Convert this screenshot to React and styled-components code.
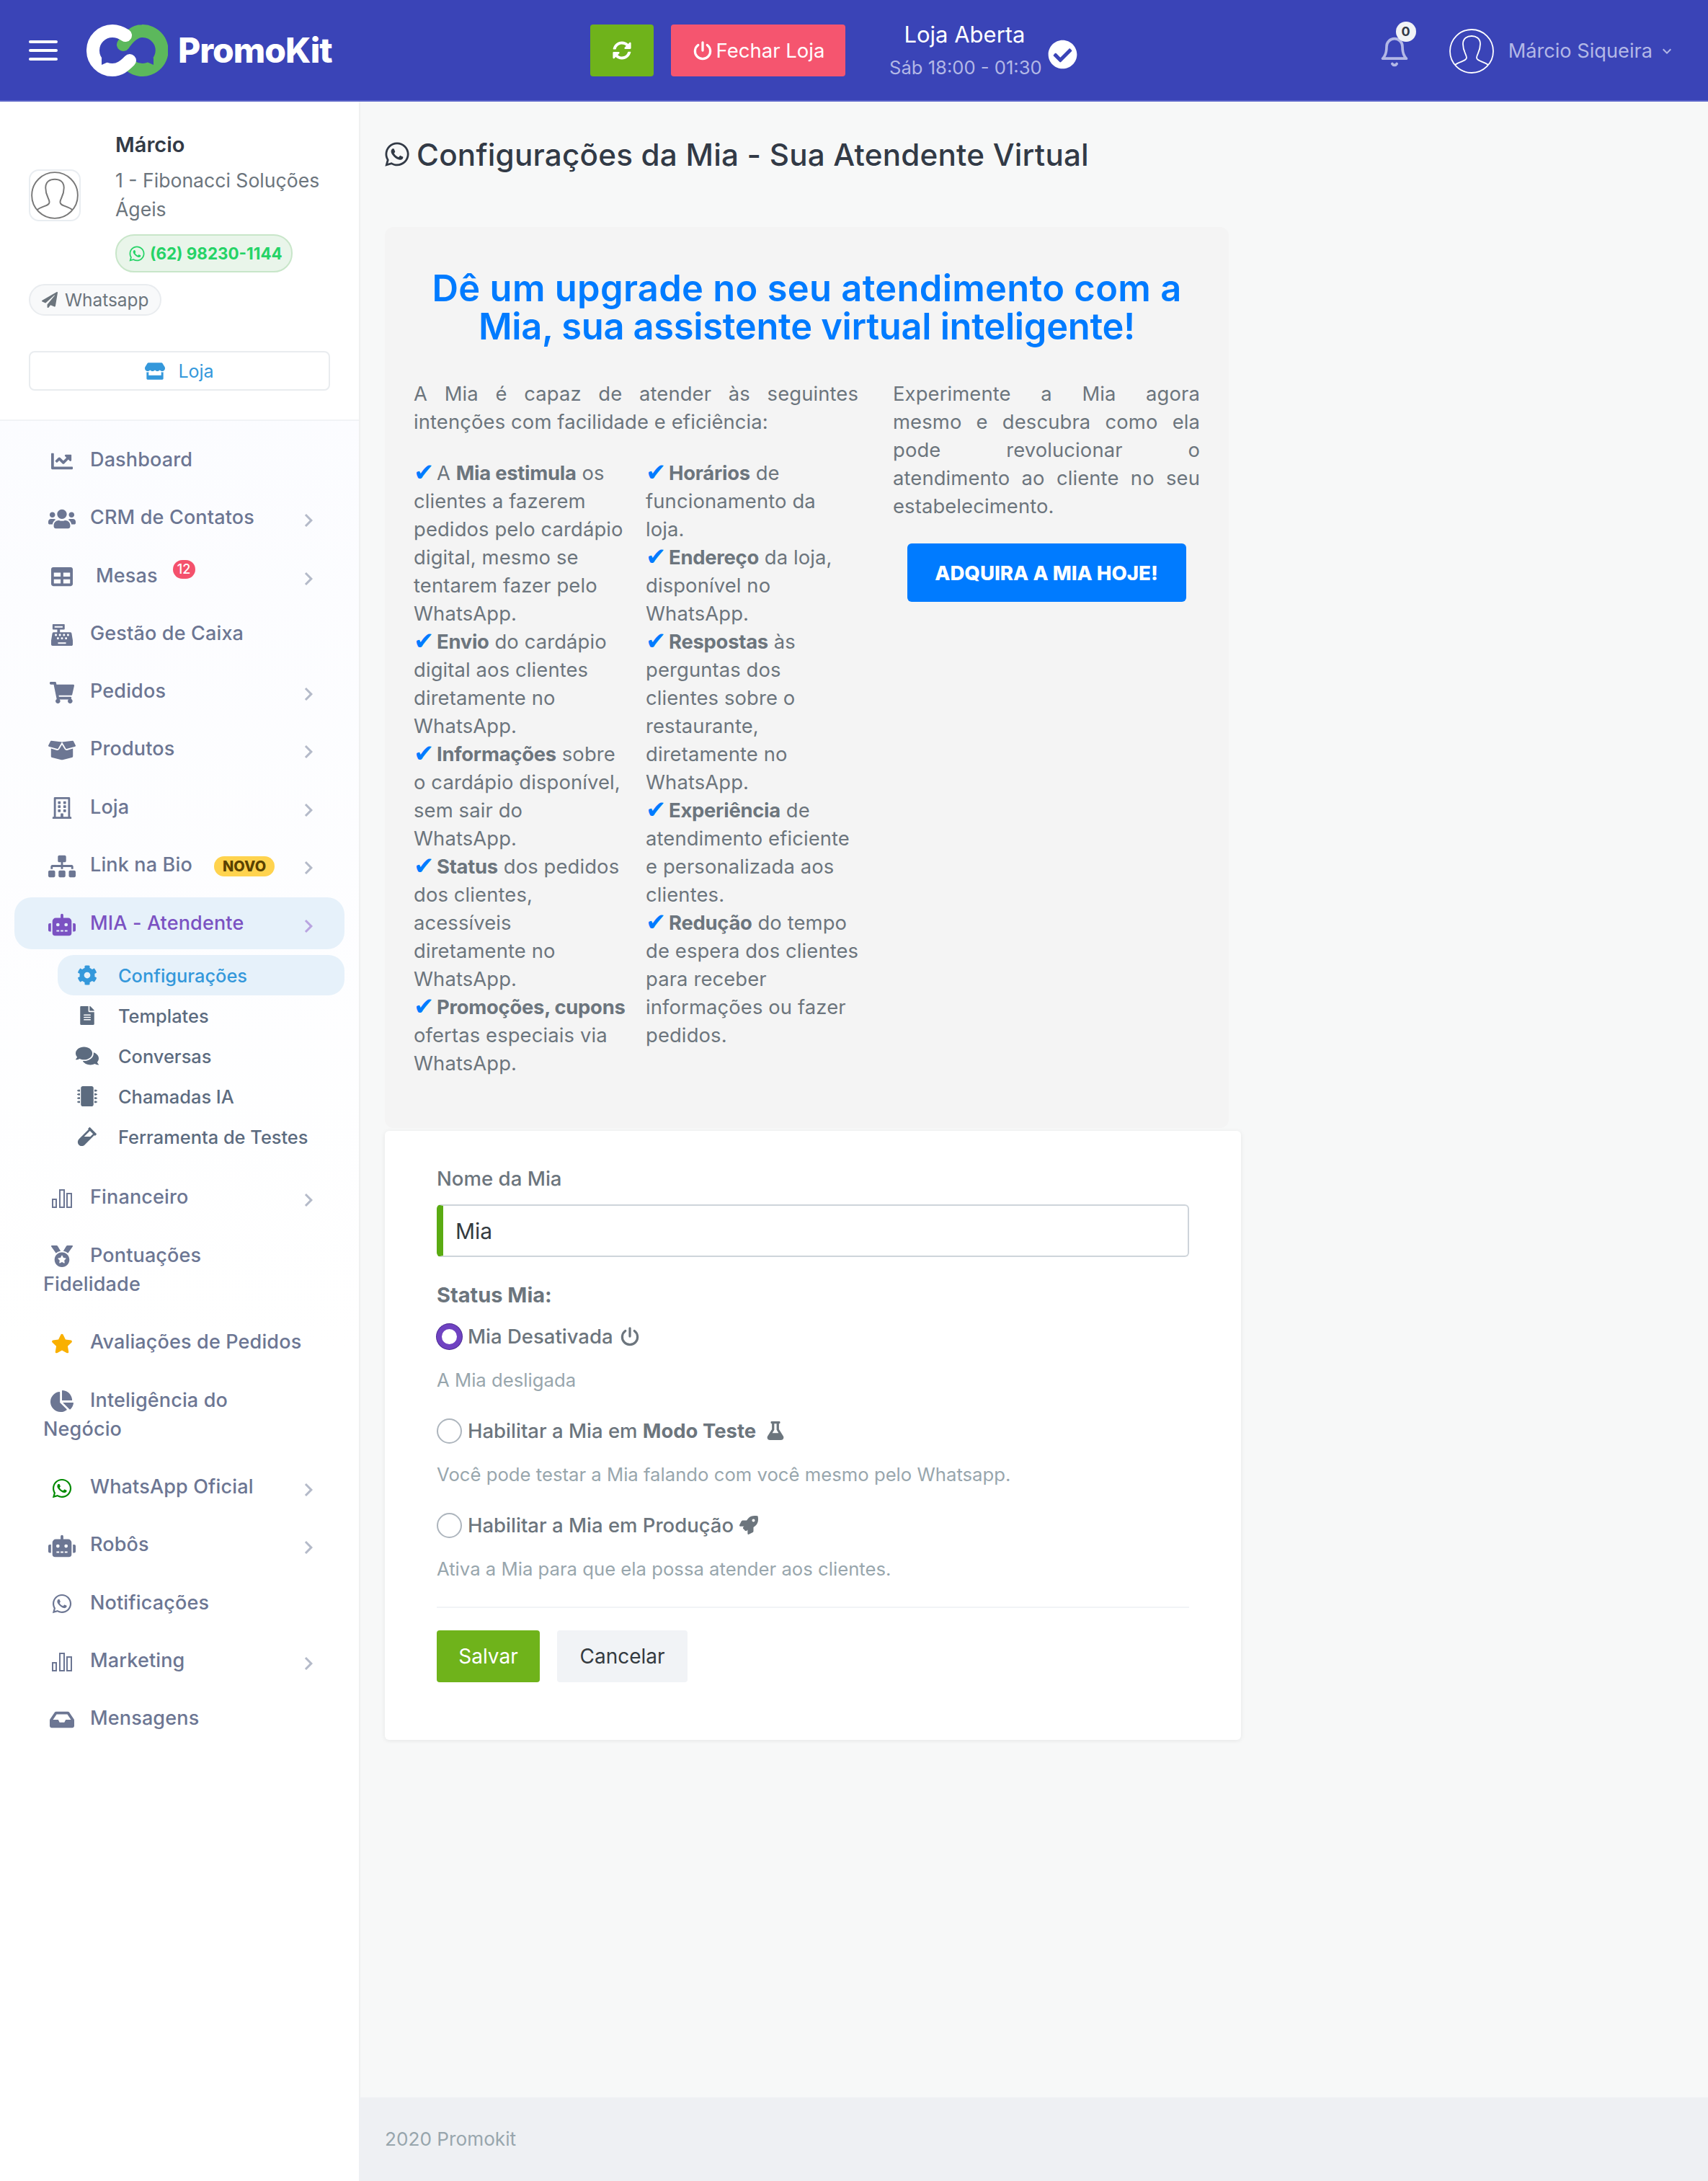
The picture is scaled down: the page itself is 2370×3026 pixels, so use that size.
import React from 'react';
import styled, { createGlobalStyle } from 'styled-components';
import {
  FaChartLine, FaUsers, FaTable, FaCashRegister, FaShoppingCart, FaBoxOpen, FaRegBuilding,
  FaSitemap, FaRobot, FaCog, FaFileAlt, FaComments, FaMicrochip, FaVial, FaMedal, FaStar,
  FaChartPie, FaWhatsapp, FaInbox, FaStore, FaPaperPlane, FaSyncAlt, FaCheckCircle, FaFlask, FaRocket,
} from 'react-icons/fa';
import { MdChevronRight, MdKeyboardArrowDown } from 'react-icons/md';
import { FiBell } from 'react-icons/fi';

const FONT = '"Inter", "Noto Sans", "Liberation Sans", sans-serif';

const GlobalStyle = createGlobalStyle`
  html, body { margin: 0; padding: 0; }
  body { font-family: ${FONT}; background: #f7f8f8; color: #6c757d; }
  * { box-sizing: border-box; }
`;

const Page = styled.div`
  width: 2370px;
  min-height: 3026px;
  display: flex;
  flex-direction: column;
`;

/* topo */
const Topbar = styled.header`
  height: 141px;
  background: #3a44b7;
  border-bottom: 2px solid #5a64c9;
  display: flex;
  align-items: center;
  padding-left: 40px;
`;

const Burger = styled.div`
  width: 40px;
  height: 28px;
  display: flex;
  flex-direction: column;
  justify-content: space-between;
  span { display: block; height: 4px; background: #fff; border-radius: 2px; }
`;

const LogoWrap = styled.div`
  display: flex;
  align-items: center;
  gap: 14px;
  margin-left: 40px;
  width: 699px;
`;

const LogoText = styled.span`
  font-size: 48px;
  font-weight: 800;
  color: #fff;
  letter-spacing: -1px;
`;

const TopButton = styled.button`
  height: 72px;
  border: 0;
  border-radius: 4px;
  background: ${p => p.$bg};
  color: #fff;
  font-family: ${FONT};
  font-size: 27.5px;
  display: flex;
  align-items: center;
  justify-content: center;
  gap: 4px;
  width: ${p => p.$w}px;
  margin-right: ${p => p.$mr || 0}px;
`;

const StoreStatus = styled.div`
  display: flex;
  align-items: center;
  margin-left: 61px;
  margin-top: 5px;
`;

const StatusText = styled.div`
  width: 209px;
  text-align: center;
  margin-right: 11px;
`;

const StatusTitle = styled.div`
  color: #fff;
  font-size: 31px;
  line-height: 44px;
`;

const StatusHours = styled.div`
  color: #b3b8e6;
  font-size: 25.6px;
  line-height: 48px;
  white-space: nowrap;
`;

const TopRight = styled.div`
  margin-left: auto;
  display: flex;
  align-items: center;
  padding-right: 45px;
  margin-top: 2px;
`;

const BellWrap = styled.div`
  position: relative;
  width: 44px;
  height: 44px;
  color: #b3b8e6;
  margin-right: 53px;
  margin-top: 2px;
`;

const BellBadge = styled.span`
  position: absolute;
  top: -20px;
  right: -8px;
  width: 28px;
  height: 28px;
  border-radius: 50%;
  background: #f1f3f6;
  color: #323a46;
  font-size: 18px;
  font-weight: 700;
  display: flex;
  align-items: center;
  justify-content: center;
`;

const UserName = styled.span`
  color: #b3b8e6;
  font-size: 27.2px;
  margin-left: 19px;
  white-space: nowrap;
`;

/* corpo */
const Body = styled.div`
  flex: 1;
  display: flex;
`;

const Sidebar = styled.aside`
  width: 498px;
  flex: none;
  background: linear-gradient(180deg, #fafbff 0%, #ffffff 60%);
  box-shadow: 1px 0 3px rgba(0, 0, 0, 0.06);
  display: flex;
  flex-direction: column;
`;

const Profile = styled.div`
  background: #fff;
  padding: 40px 40px 40px;
  border-bottom: 2px solid #f1f3f6;
`;

const ProfileTop = styled.div`
  display: flex;
`;

const AvatarBox = styled.div`
  width: 72px;
  height: 72px;
  border: 2px solid #e9edf1;
  border-radius: 14px;
  flex: none;
  margin: 54px 48px 0 0;
  display: flex;
  align-items: center;
  justify-content: center;
`;

const ProfileName = styled.div`
  color: #323a46;
  font-size: 29px;
  font-weight: 600;
  line-height: 40px;
`;

const ProfileCompany = styled.div`
  font-size: 26.6px;
  line-height: 40px;
  color: #6c757d;
  margin-top: 9px;
`;

const PhoneChip = styled.div`
  display: inline-flex;
  align-items: center;
  gap: 6px;
  height: 53px;
  width: 246px;
  padding-left: 16px;
  margin-top: 15px;
  background: #e9f5ea;
  border: 2px solid #c8e6c9;
  border-radius: 26px;
  color: #25d366;
  font-size: 22.4px;
  font-weight: 700;
  white-space: nowrap;
`;

const ChannelChip = styled.div`
  display: inline-flex;
  align-items: center;
  gap: 10px;
  height: 44px;
  width: 184px;
  padding-left: 16px;
  margin-top: 16px;
  background: #f8f9fa;
  border: 2px solid #e9ecef;
  border-radius: 22px;
  font-size: 24.4px;
  color: #6c757d;
`;

const StoreButton = styled.div`
  height: 55px;
  margin-top: 49px;
  border: 2px solid #e9ecef;
  border-radius: 8px;
  background: #fff;
  color: #3498db;
  font-size: 25px;
  display: flex;
  align-items: center;
  justify-content: center;
  gap: 18px;
`;

const Nav = styled.nav`
  padding-top: 14px;
`;

const NavItem = styled.div`
  position: relative;
  margin: ${p => (p.$active ? '5px 20px' : '0')};
  padding: ${p => (p.$active ? '15.85px 40px' : '20px 60px')};
  background: ${p => (p.$active ? '#e6f1fa' : 'transparent')};
  border-radius: 24px;
  color: ${p => (p.$active ? '#7b52c2' : '#6c7693')};
  font-size: 27px;
  font-weight: 500;
  letter-spacing: 0.15px;
  line-height: 40.3px;
  white-space: nowrap;
`;

const NavIcon = styled.span`
  display: inline-flex;
  justify-content: center;
  align-items: center;
  width: 52px;
  height: 20px;
  margin-right: ${p => p.$mr || 13}px;
  vertical-align: middle;
  color: ${p => p.$color || 'inherit'};
`;

const Chevron = styled.span`
  float: right;
  margin: 6px -8px 0 0;
  height: 34px;
  color: ${p => (p.$active ? '#b9a4e0' : '#b4bac9')};
`;

const Pill = styled.span`
  display: inline-block;
  vertical-align: ${p => p.$up}px;
  margin: -14px 0 -14px ${p => p.$ml}px;
  height: ${p => p.$h}px;
  line-height: ${p => p.$h}px;
  padding: 0 ${p => p.$pad}px;
  border-radius: 15px;
  background: ${p => p.$bg};
  color: ${p => p.$fg};
  font-size: ${p => p.$fs}px;
  font-weight: ${p => p.$fw};
`;

const SubNav = styled.div`
  margin: 8px 20px 16px 80px;
`;

const SubItem = styled.div`
  height: 56px;
  display: flex;
  align-items: center;
  border-radius: 22px;
  padding-left: 20px;
  font-size: 25.4px;
  font-weight: 500;
  white-space: nowrap;
  background: ${p => (p.$active ? '#e6f1fa' : 'transparent')};
  color: ${p => (p.$active ? '#3498db' : '#5c6b7f')};
`;

const SubIcon = styled.span`
  width: 42px;
  display: flex;
  justify-content: center;
  margin-right: 22px;
`;

/* conteudo */
const Main = styled.main`
  flex: 1;
  display: flex;
  flex-direction: column;
  min-width: 0;
`;

const Content = styled.div`
  flex: 1;
  padding: 0 36px;
  width: 1260px;
`;

const PageTitle = styled.h4`
  display: flex;
  align-items: center;
  gap: 8px;
  margin: 0 0 0 -2px;
  height: 174px;
  padding-bottom: 28px;
  color: #323a46;
  font-size: 42.2px;
  font-weight: 500;
  letter-spacing: 0.2px;
  white-space: nowrap;
`;

const PromoCard = styled.section`
  width: 1171px;
  height: 1250px;
  background: #f4f4f4;
  border-radius: 12px;
  padding: 58px 40px 0;
`;

const PromoHeading = styled.h2`
  margin: 0 -20px 48px;
  text-align: center;
  color: #007bff;
  font-size: 50.6px;
  line-height: 53px;
  font-weight: 600;
  white-space: nowrap;
`;

const HeadingLine = styled.span`
  display: block;
  letter-spacing: ${p => p.$ls}px;
`;

const PromoRow = styled.div`
  display: flex;
  gap: 48px;
  font-size: 27.4px;
  letter-spacing: 0.12px;
  line-height: 39px;
  color: #6c757d;
`;

const PromoMain = styled.div`
  width: 617px;
  flex: none;
`;

const PromoSide = styled.div`
  width: 426px;
  flex: none;
`;

const JustLine = styled.span`
  display: block;
  text-align: justify;
  text-align-last: justify;
`;

const Plain = styled.span`
  display: block;
  white-space: nowrap;
`;

const ListColumns = styled.div`
  display: grid;
  grid-template-columns: 322px 1fr;
  margin-top: 32px;
  white-space: nowrap;
  b { font-weight: 700; letter-spacing: -0.25px; }
`;

const Check = styled.span`
  display: inline-block;
  width: 32px;
  color: #007bff;
  font-family: "DejaVu Sans", sans-serif;
  font-size: 34px;
  line-height: 0;
  vertical-align: -1px;
`;

const BuyButton = styled.button`
  display: block;
  width: 387px;
  height: 81px;
  margin: 32px auto 0;
  border: 0;
  border-radius: 6px;
  background: #007bff;
  color: #fff;
  font-family: ${FONT};
  font-size: 27.6px;
  font-weight: 800;
`;

const FormCard = styled.section`
  width: 1188px;
  height: 845px;
  margin-top: 4px;
  background: #fff;
  border-radius: 6px;
  box-shadow: 0 1px 6px rgba(0, 0, 0, 0.08);
  padding: 46px 72px 0;
`;

const FieldLabel = styled.label`
  display: block;
  font-size: 27.6px;
  line-height: 40px;
  font-weight: 500;
  color: #6c757d;
`;

const NameInput = styled.div`
  height: 73px;
  margin-top: 16px;
  display: flex;
  align-items: center;
  padding-left: 17px;
  border: 2px solid #ced4da;
  border-left: 9px solid #5aab12;
  border-radius: 6px;
  color: #343a40;
  font-size: 30px;
`;

const StatusHeading = styled.div`
  margin-top: 33px;
  font-size: 29px;
  line-height: 40px;
  font-weight: 700;
  color: #6c757d;
`;

const RadioRow = styled.div`
  display: flex;
  align-items: center;
  gap: 8px;
  height: 36px;
  margin-top: ${p => p.$mt}px;
  font-size: 27.5px;
  font-weight: 500;
  color: #6c757d;
  white-space: nowrap;
  b { font-weight: 700; }
`;

const Hint = styled.div`
  margin-top: 23px;
  font-size: 25.7px;
  line-height: 40px;
  color: #98a6ad;
  white-space: nowrap;
`;

const RadioDot = styled.span`
  width: 35px;
  height: 35px;
  flex: none;
  border-radius: 50%;
  background: #fff;
  border: ${p => (p.$on ? '7px solid #6f42c1' : '2px solid #adb5bd')};
  box-shadow: ${p => (p.$on ? '0 0 0 1px #4b2b94' : 'none')};
`;

const Divider = styled.hr`
  border: 0;
  border-top: 2px solid #f1f3f6;
  margin: 32px 0 31px;
`;

const Actions = styled.div`
  display: flex;
  gap: 24px;
`;

const ActionButton = styled.button`
  height: 72px;
  width: ${p => p.$w}px;
  border: 0;
  border-radius: 4px;
  background: ${p => p.$bg};
  color: ${p => p.$fg};
  font-family: ${FONT};
  font-size: 28px;
`;

const Footer = styled.footer`
  height: 116px;
  background: #eef0f3;
  color: #98a6ad;
  font-size: 26.2px;
  display: flex;
  align-items: center;
  padding: 0 0 2px 36px;
`;

const Logo = () => (
  <svg width="113" height="72" viewBox="0 0 113 72">
    <path d="M51 28 C58 18 66 9 77 9 A27 27 0 1 1 62 58" fill="none" stroke="#5cb85c" strokeWidth="18" strokeLinecap="round" />
    <path d="M93 56 L93 46 L84 52z" fill="#3a44b7" />
    <path d="M54 15 C48 11 42 9 36 9 A27 27 0 1 0 36 63 C46 63 52 58 60 50" fill="none" stroke="#fff" strokeWidth="18" strokeLinecap="round" />
    <path d="M21 56 L21 46 L30 52z" fill="#3a44b7" />
  </svg>
);

const Silhouette = ({ size, color, width }) => (
  <svg width={size} height={size} viewBox="0 0 64 64" fill="none" stroke={color} strokeWidth={width}>
    <circle cx="32" cy="32" r="30" />
    <path d="M9 51 C15 46 25 46 25 41 C25 36 20 33 20 22 C20 14 26 11 32 11 C38 11 44 14 44 22 C44 33 39 36 39 41 C39 46 49 46 55 51" />
  </svg>
);

const Bars = ({ size }) => (
  <svg width={size} height={size} viewBox="0 0 28 28" fill="none" stroke="currentColor" strokeWidth="2">
    <rect x="1" y="15" width="5" height="11" />
    <rect x="11" y="2" width="6" height="24" />
    <rect x="21" y="7" width="6" height="19" />
  </svg>
);

const Power = ({ size }) => (
  <svg width={size} height={size} viewBox="0 0 24 24" fill="none" stroke="currentColor" strokeWidth="2.6" strokeLinecap="round">
    <path d="M12 3 V12" />
    <path d="M7 6 A8.5 8.5 0 1 0 17 6" />
  </svg>
);

const navBefore = [
  { label: 'Dashboard', icon: <FaChartLine size={30} /> },
  { label: 'CRM de Contatos', icon: <FaUsers size={38} />, sub: true },
  { label: 'Mesas', icon: <FaTable size={30} />, sub: true, badge: '12', mr: 21 },
  { label: 'Gestão de Caixa', icon: <FaCashRegister size={30} /> },
  { label: 'Pedidos', icon: <FaShoppingCart size={34} />, sub: true },
  { label: 'Produtos', icon: <FaBoxOpen size={38} />, sub: true },
  { label: 'Loja', icon: <FaRegBuilding size={30} />, sub: true },
  { label: 'Link na Bio', icon: <FaSitemap size={38} />, sub: true, novo: true },
];

const navAfter = [
  { label: 'Financeiro', icon: <Bars size={28} />, sub: true },
  { label: 'Pontuações', second: 'Fidelidade', icon: <FaMedal size={30} /> },
  { label: 'Avaliações de Pedidos', icon: <FaStar size={30} />, color: '#f9b000' },
  { label: 'Inteligência do', second: 'Negócio', icon: <FaChartPie size={32} /> },
  { label: 'WhatsApp Oficial', icon: <FaWhatsapp size={30} />, color: '#008a00', sub: true },
  { label: 'Robôs', icon: <FaRobot size={38} />, sub: true },
  { label: 'Notificações', icon: <FaWhatsapp size={30} /> },
  { label: 'Marketing', icon: <Bars size={28} />, sub: true },
  { label: 'Mensagens', icon: <FaInbox size={34} /> },
];

const subItems = [
  { label: 'Configurações', icon: <FaCog size={28} />, active: true },
  { label: 'Templates', icon: <FaFileAlt size={26} /> },
  { label: 'Conversas', icon: <FaComments size={32} /> },
  { label: 'Chamadas IA', icon: <FaMicrochip size={28} /> },
  { label: 'Ferramenta de Testes', icon: <FaVial size={28} /> },
];

const renderNav = item => (
  <NavItem key={item.label}>
    {item.sub && (
      <Chevron>
        <MdChevronRight size={36} />
      </Chevron>
    )}
    <NavIcon $color={item.color} $mr={item.mr}>
      {item.icon}
    </NavIcon>
    {item.label}
    {item.badge && (
      <Pill $up={12} $ml={21} $h={26} $pad={6} $bg="#f4516c" $fg="#fff" $fs={18} $fw={500}>
        {item.badge}
      </Pill>
    )}
    {item.novo && (
      <Pill $up={0} $ml={30} $h={28} $pad={12} $bg="#ffd34e" $fg="#5a4200" $fs={20} $fw={800}>
        NOVO
      </Pill>
    )}
    {item.second && (
      <>
        <br />
        {item.second}
      </>
    )}
  </NavItem>
);

const Tick = () => <Check>✔</Check>;

export default function App() {
  return (
    <Page>
      <GlobalStyle />
      <Topbar>
        <Burger>
          <span />
          <span />
          <span />
        </Burger>
        <LogoWrap>
          <Logo />
          <LogoText>PromoKit</LogoText>
        </LogoWrap>
        <TopButton $bg="#6fb31b" $w={88} $mr={24}>
          <FaSyncAlt size={26} />
        </TopButton>
        <TopButton $bg="#f5556f" $w={242}>
          <Power size={30} />
          Fechar Loja
        </TopButton>
        <StoreStatus>
          <StatusText>
            <StatusTitle>Loja Aberta</StatusTitle>
            <StatusHours>Sáb 18:00 - 01:30</StatusHours>
          </StatusText>
          <FaCheckCircle size={41} color="#fff" style={{ marginTop: 6 }} />
        </StoreStatus>
        <TopRight>
          <BellWrap>
            <FiBell size={44} />
            <BellBadge>0</BellBadge>
          </BellWrap>
          <Silhouette size={64} color="#fff" width={1.8} />
          <UserName>Márcio Siqueira</UserName>
          <MdKeyboardArrowDown size={24} color="#b3b8e6" style={{ marginLeft: 8 }} />
        </TopRight>
      </Topbar>

      <Body>
        <Sidebar>
          <Profile>
            <ProfileTop>
              <AvatarBox>
                <Silhouette size={68} color="#777" width={1.8} />
              </AvatarBox>
              <div>
                <ProfileName>Márcio</ProfileName>
                <ProfileCompany>
                  1 - Fibonacci Soluções
                  <br />
                  Ágeis
                </ProfileCompany>
                <PhoneChip>
                  <FaWhatsapp size={24} />
                  (62) 98230-1144
                </PhoneChip>
              </div>
            </ProfileTop>
            <ChannelChip>
              <FaPaperPlane size={22} />
              Whatsapp
            </ChannelChip>
            <StoreButton>
              <FaStore size={28} />
              Loja
            </StoreButton>
          </Profile>

          <Nav>
            {navBefore.map(renderNav)}
            <NavItem $active>
              <Chevron $active>
                <MdChevronRight size={36} />
              </Chevron>
              <NavIcon>
                <FaRobot size={38} />
              </NavIcon>
              MIA - Atendente
            </NavItem>
            <SubNav>
              {subItems.map(s => (
                <SubItem key={s.label} $active={s.active}>
                  <SubIcon>{s.icon}</SubIcon>
                  {s.label}
                </SubItem>
              ))}
            </SubNav>
            {navAfter.map(renderNav)}
          </Nav>
        </Sidebar>

        <Main>
          <Content>
            <PageTitle>
              <FaWhatsapp size={38} />
              Configurações da Mia - Sua Atendente Virtual
            </PageTitle>

            <PromoCard>
              <PromoHeading>
                <HeadingLine $ls={0.3}>Dê um upgrade no seu atendimento com a</HeadingLine>
                <HeadingLine $ls={-0.3}>Mia, sua assistente virtual inteligente!</HeadingLine>
              </PromoHeading>
              <PromoRow>
                <PromoMain>
                  <JustLine>A Mia é capaz de atender às seguintes</JustLine>
                  <Plain>intenções com facilidade e eficiência:</Plain>
                  <ListColumns>
                    <div>
                      <Tick />A <b>Mia estimula</b> os
                      <br />
                      clientes a fazerem
                      <br />
                      pedidos pelo cardápio
                      <br />
                      digital, mesmo se
                      <br />
                      tentarem fazer pelo
                      <br />
                      WhatsApp.
                      <br />
                      <Tick />
                      <b>Envio</b> do cardápio
                      <br />
                      digital aos clientes
                      <br />
                      diretamente no
                      <br />
                      WhatsApp.
                      <br />
                      <Tick />
                      <b>Informações</b> sobre
                      <br />o cardápio disponível,
                      <br />
                      sem sair do
                      <br />
                      WhatsApp.
                      <br />
                      <Tick />
                      <b>Status</b> dos pedidos
                      <br />
                      dos clientes,
                      <br />
                      acessíveis
                      <br />
                      diretamente no
                      <br />
                      WhatsApp.
                      <br />
                      <Tick />
                      <b>Promoções, cupons</b>
                      <br />
                      ofertas especiais via
                      <br />
                      WhatsApp.
                    </div>
                    <div>
                      <Tick />
                      <b>Horários</b> de
                      <br />
                      funcionamento da
                      <br />
                      loja.
                      <br />
                      <Tick />
                      <b>Endereço</b> da loja,
                      <br />
                      disponível no
                      <br />
                      WhatsApp.
                      <br />
                      <Tick />
                      <b>Respostas</b> às
                      <br />
                      perguntas dos
                      <br />
                      clientes sobre o
                      <br />
                      restaurante,
                      <br />
                      diretamente no
                      <br />
                      WhatsApp.
                      <br />
                      <Tick />
                      <b>Experiência</b> de
                      <br />
                      atendimento eficiente
                      <br />e personalizada aos
                      <br />
                      clientes.
                      <br />
                      <Tick />
                      <b>Redução</b> do tempo
                      <br />
                      de espera dos clientes
                      <br />
                      para receber
                      <br />
                      informações ou fazer
                      <br />
                      pedidos.
                    </div>
                  </ListColumns>
                </PromoMain>
                <PromoSide>
                  <JustLine>Experimente a Mia agora</JustLine>
                  <JustLine>mesmo e descubra como ela</JustLine>
                  <JustLine>pode revolucionar o</JustLine>
                  <JustLine>atendimento ao cliente no seu</JustLine>
                  <Plain>estabelecimento.</Plain>
                  <BuyButton>ADQUIRA A MIA HOJE!</BuyButton>
                </PromoSide>
              </PromoRow>
            </PromoCard>

            <FormCard>
              <FieldLabel>Nome da Mia</FieldLabel>
              <NameInput>Mia</NameInput>
              <StatusHeading>Status Mia:</StatusHeading>
              <RadioRow $mt={19}>
                <RadioDot $on />
                Mia Desativada
                <Power size={30} />
              </RadioRow>
              <Hint>A Mia desligada</Hint>
              <RadioRow $mt={32}>
                <RadioDot />
                <span>
                  Habilitar a Mia em <b>Modo Teste</b>
                </span>
                <FaFlask size={26} style={{ marginLeft: 6 }} />
              </RadioRow>
              <Hint>Você pode testar a Mia falando com você mesmo pelo Whatsapp.</Hint>
              <RadioRow $mt={32}>
                <RadioDot />
                Habilitar a Mia em Produção
                <FaRocket size={26} />
              </RadioRow>
              <Hint>Ativa a Mia para que ela possa atender aos clientes.</Hint>
              <Divider />
              <Actions>
                <ActionButton $w={143} $bg="#6fb31b" $fg="#fff">
                  Salvar
                </ActionButton>
                <ActionButton $w={181} $bg="#f1f3f6" $fg="#343a40">
                  Cancelar
                </ActionButton>
              </Actions>
            </FormCard>
          </Content>
          <Footer>2020 Promokit</Footer>
        </Main>
      </Body>
    </Page>
  );
}
